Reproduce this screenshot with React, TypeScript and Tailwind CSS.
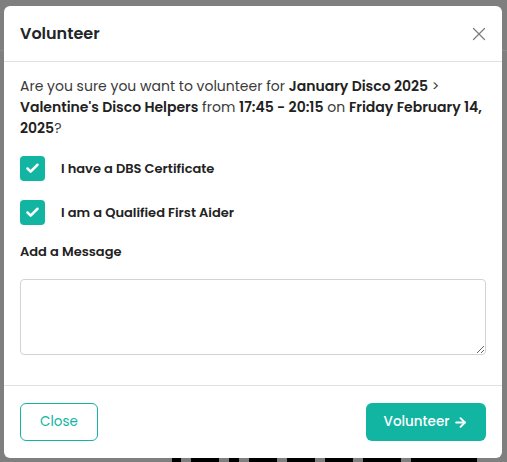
import { X, Check, ArrowRight } from 'lucide-react';

const font = { fontFamily: 'Poppins, Inter, "Noto Sans", sans-serif' };

export default function App() {
  return (
    <div className="relative w-[507px] h-[462px] overflow-hidden bg-[#7f7f7f]" style={font}>
      {/* faint page behind overlay */}
      <div className="absolute left-0 right-0 top-[50px] h-px bg-[#8a8a8a]" />
      <div className="absolute left-0 right-0 bottom-0 h-[5px] flex">
        <div className="w-[172px]" />
        <div className="w-[9px] bg-black" />
        <div className="w-[10px]" />
        <div className="w-[28px] bg-black" />
        <div className="w-[10px]" />
        <div className="w-[10px] bg-black" />
        <div className="w-[10px]" />
        <div className="w-[28px] bg-black" />
        <div className="w-[10px]" />
        <div className="w-[28px] bg-black" />
        <div className="w-[10px]" />
        <div className="w-[28px] bg-black" />
        <div className="w-[10px]" />
        <div className="w-[38px] bg-black" />
        <div className="w-[10px]" />
        <div className="w-[66px] bg-black" />
      </div>

      <div className="absolute left-[4px] top-[6px] w-[498px] h-[452px] bg-white rounded-md flex flex-col">
        <div className="h-[56px] flex items-center justify-between pl-4 pr-[12px] border-b border-[#dee2e6]">
          <h2 className="text-[16px] font-semibold text-[#212529]">Volunteer</h2>
          <X className="w-[22px] h-[22px] text-[#7a7f85]" strokeWidth={1.4} />
        </div>

        <div className="flex-1 px-4 pt-[14px]">
          <p className="text-[14px] leading-[21px] text-[#3a3a3a]">
            Are you sure you want to volunteer for <b className="font-semibold text-[#222]">January Disco 2025</b> &gt;{' '}
            <b className="font-semibold text-[#222]">Valentine's Disco Helpers</b> from{' '}
            <b className="font-semibold text-[#222]">17:45 - 20:15</b> on{' '}
            <b className="font-semibold text-[#222]">Friday February 14, 2025</b>?
          </p>

          <div className="mt-[17px] flex flex-col gap-[19px]">
            {['I have a DBS Certificate', 'I am a Qualified First Aider'].map((t) => (
              <label key={t} className="flex items-center gap-4">
                <span className="w-[25px] h-[25px] rounded bg-[#12b5a2] flex items-center justify-center">
                  <Check className="w-[15px] h-[15px] text-white" strokeWidth={4} />
                </span>
                <span className="text-[13px] font-semibold text-[#222]">{t}</span>
              </label>
            ))}
          </div>

          <div className="mt-[17px] text-[13px] font-semibold text-[#222]">Add a Message</div>

          <textarea className="mt-[17px] w-full h-[76px] block border border-[#cfd4da] rounded" />
        </div>

        <div className="h-[73px] border-t border-[#dee2e6] flex items-center justify-between px-4">
          <button className="w-[78px] h-[38px] rounded-md border border-[#12b5a2] text-[#12b5a2] text-[13.5px]">
            Close
          </button>
          <button className="w-[120px] h-[38px] rounded-md bg-[#12b5a2] text-white text-[13.5px] font-medium flex items-center justify-center gap-1">
            Volunteer
            <ArrowRight className="w-[15px] h-[15px]" strokeWidth={3} />
          </button>
        </div>
      </div>
    </div>
  );
}
